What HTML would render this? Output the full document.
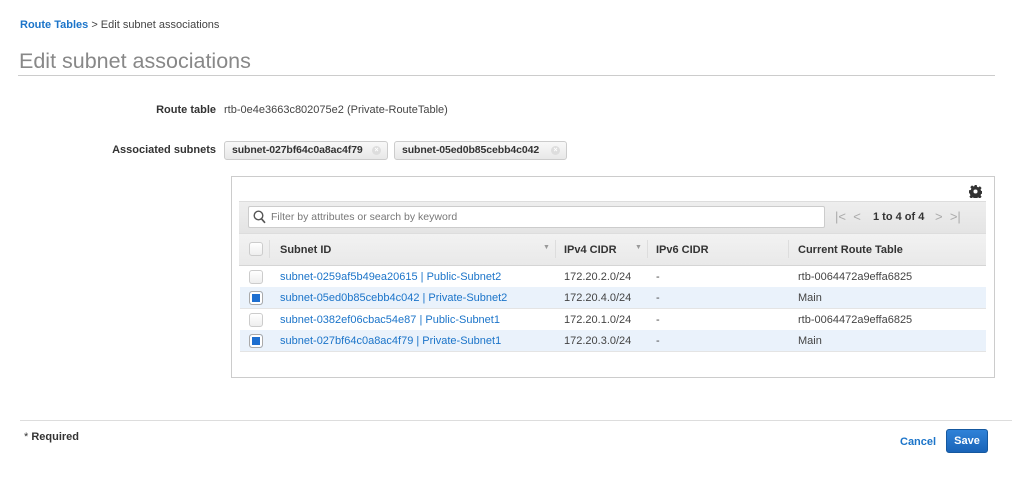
<!DOCTYPE html>
<html><head><meta charset="utf-8"><style>
*{margin:0;padding:0;box-sizing:border-box}
body{width:1024px;height:493px;background:#fff;font-family:"Liberation Sans",Arial,sans-serif;font-size:11px;color:#444;position:relative;overflow:hidden}
.a{position:absolute;white-space:nowrap}
.b{font-weight:bold;color:#333}
.link{color:#1b74c9}
.tag{position:absolute;height:19px;top:141px;border:1px solid #ccc;border-radius:3px;background:linear-gradient(#f8f8f8,#e8e8e8);font-weight:bold;color:#333;font-size:10.5px;line-height:17px;padding-left:7px;letter-spacing:-0.1px}
.tag i{position:absolute;right:6px;top:4px;width:9px;height:9px;border-radius:50%;background:#ddd;color:#fff;font-size:7px;line-height:9px;text-align:center;font-style:normal}
.cb{position:absolute;left:249px;width:14px;height:14px;border:1px solid #ccc;border-radius:3px;background:linear-gradient(#fff,#eee)}
.cb.on{background:#1e6fd0;border-color:#aaa;box-shadow:inset 0 0 0 2px #fff}
.row{position:absolute;left:240px;width:746px;height:22px;border-bottom:1px solid #e4e4e4}
.row.sel{background:#eaf2fb}
.row span{position:absolute;top:5px;white-space:nowrap}
</style></head><body>
<div class="a" style="left:20px;top:19px"><span class="link b" style="color:#1b74c9">Route Tables</span> &gt; Edit subnet associations</div>
<div class="a" style="left:19px;top:49px;font-size:21.5px;color:#888">Edit subnet associations</div>
<div class="a" style="left:18px;top:75px;width:977px;height:1px;background:#ccc"></div>

<div class="a b" style="right:808px;top:104px">Route table</div>
<div class="a" style="left:224px;top:104px">rtb-0e4e3663c802075e2 (Private-RouteTable)</div>
<div class="a b" style="right:808px;top:144px">Associated subnets</div>
<div class="tag" style="left:224px;width:164px">subnet-027bf64c0a8ac4f79<i>×</i></div>
<div class="tag" style="left:394px;width:173px">subnet-05ed0b85cebb4c042<i>×</i></div>

<div class="a" style="left:231px;top:176px;width:764px;height:202px;border:1px solid #ccc"></div>
<svg class="a" style="left:969px;top:185px" width="13" height="13" viewBox="0 0 16 16"><path fill="#333" d="M6.5 0h3l.4 2.2 1.6.7 1.9-1.3 2.1 2.1-1.3 1.9.7 1.6 2.2.4v3l-2.2.4-.7 1.6 1.3 1.9-2.1 2.1-1.9-1.3-1.6.7-.4 2.2h-3l-.4-2.2-1.6-.7-1.900 1.3-2.1-2.1 1.3-1.9-.7-1.6L0 9.5v-3l2.2-.4.7-1.6-1.3-1.9 2.1-2.1 1.9 1.3 1.6-.7zM8 5.5a2.5 2.5 0 100 5 2.5 2.5 0 000-5z"/></svg>
<div class="a" style="left:239px;top:201px;width:747px;height:32px;background:linear-gradient(#eee,#e4e4e4);border-top:1px solid #ddd"></div>
<div class="a" style="left:248px;top:206px;width:577px;height:22px;background:#fff;border:1px solid #ccc;border-radius:2px"></div>
<svg class="a" style="left:253px;top:210px" width="13" height="14" viewBox="0 0 13 14"><circle cx="5.5" cy="5.5" r="4.3" fill="none" stroke="#555" stroke-width="1.4"/><path d="M8.5 8.8l3.5 4" stroke="#555" stroke-width="1.6"/></svg>
<div class="a" style="left:271px;top:211px;color:#777;font-size:10.5px">Filter by attributes or search by keyword</div>
<div class="a" style="left:835px;top:209px;color:#aaa;font-size:13px">|&lt;&nbsp;&nbsp;&lt;</div>
<div class="a b" style="left:873px;top:211px">1 to 4 of 4</div>
<div class="a" style="left:935px;top:209px;color:#aaa;font-size:13px">&gt;&nbsp;&nbsp;&gt;|</div>

<div class="a" style="left:239px;top:233px;width:747px;height:33px;background:linear-gradient(#f2f2f2,#e9e9e9);border-top:1px solid #ddd;border-bottom:1px solid #d5d5d5"></div>
<div class="cb" style="top:242px"></div>
<div class="a" style="left:269px;top:240px;width:1px;height:18px;background:#ddd"></div>
<div class="a b" style="left:280px;top:244px">Subnet ID</div>
<div class="a" style="left:543px;top:244px;color:#999;font-size:7px">▼</div>
<div class="a" style="left:555px;top:240px;width:1px;height:18px;background:#ddd"></div>
<div class="a b" style="left:564px;top:244px">IPv4 CIDR</div>
<div class="a" style="left:635px;top:244px;color:#999;font-size:7px">▼</div>
<div class="a" style="left:647px;top:240px;width:1px;height:18px;background:#ddd"></div>
<div class="a b" style="left:656px;top:244px">IPv6 CIDR</div>
<div class="a" style="left:788px;top:240px;width:1px;height:18px;background:#ddd"></div>
<div class="a b" style="left:798px;top:244px">Current Route Table</div>

<div class="row" style="top:266px"><span class="link" style="left:40px">subnet-0259af5b49ea20615 | Public-Subnet2</span><span style="left:324px">172.20.2.0/24</span><span style="left:416px">-</span><span style="left:558px">rtb-0064472a9effa6825</span></div>
<div class="row sel" style="top:287px"><span class="link" style="left:40px">subnet-05ed0b85cebb4c042 | Private-Subnet2</span><span style="left:324px">172.20.4.0/24</span><span style="left:416px">-</span><span style="left:558px">Main</span></div>
<div class="row" style="top:309px"><span class="link" style="left:40px">subnet-0382ef06cbac54e87 | Public-Subnet1</span><span style="left:324px">172.20.1.0/24</span><span style="left:416px">-</span><span style="left:558px">rtb-0064472a9effa6825</span></div>
<div class="row sel" style="top:330px"><span class="link" style="left:40px">subnet-027bf64c0a8ac4f79 | Private-Subnet1</span><span style="left:324px">172.20.3.0/24</span><span style="left:416px">-</span><span style="left:558px">Main</span></div>
<div class="cb" style="top:270px"></div>
<div class="cb on" style="top:291px"></div>
<div class="cb" style="top:313px"></div>
<div class="cb on" style="top:334px"></div>

<div class="a" style="left:20px;top:420px;width:992px;height:1px;background:#ddd"></div>
<div class="a" style="left:24px;top:431px;color:#333">* <b>Required</b></div>
<div class="a b" style="left:900px;top:436px;color:#1b74c9">Cancel</div>
<div class="a b" style="left:946px;top:429px;width:42px;height:24px;background:linear-gradient(#2f82d8,#1a64b8);border:1px solid #15589f;border-radius:3px;color:#fff;text-align:center;line-height:22px">Save</div>
</body></html>
